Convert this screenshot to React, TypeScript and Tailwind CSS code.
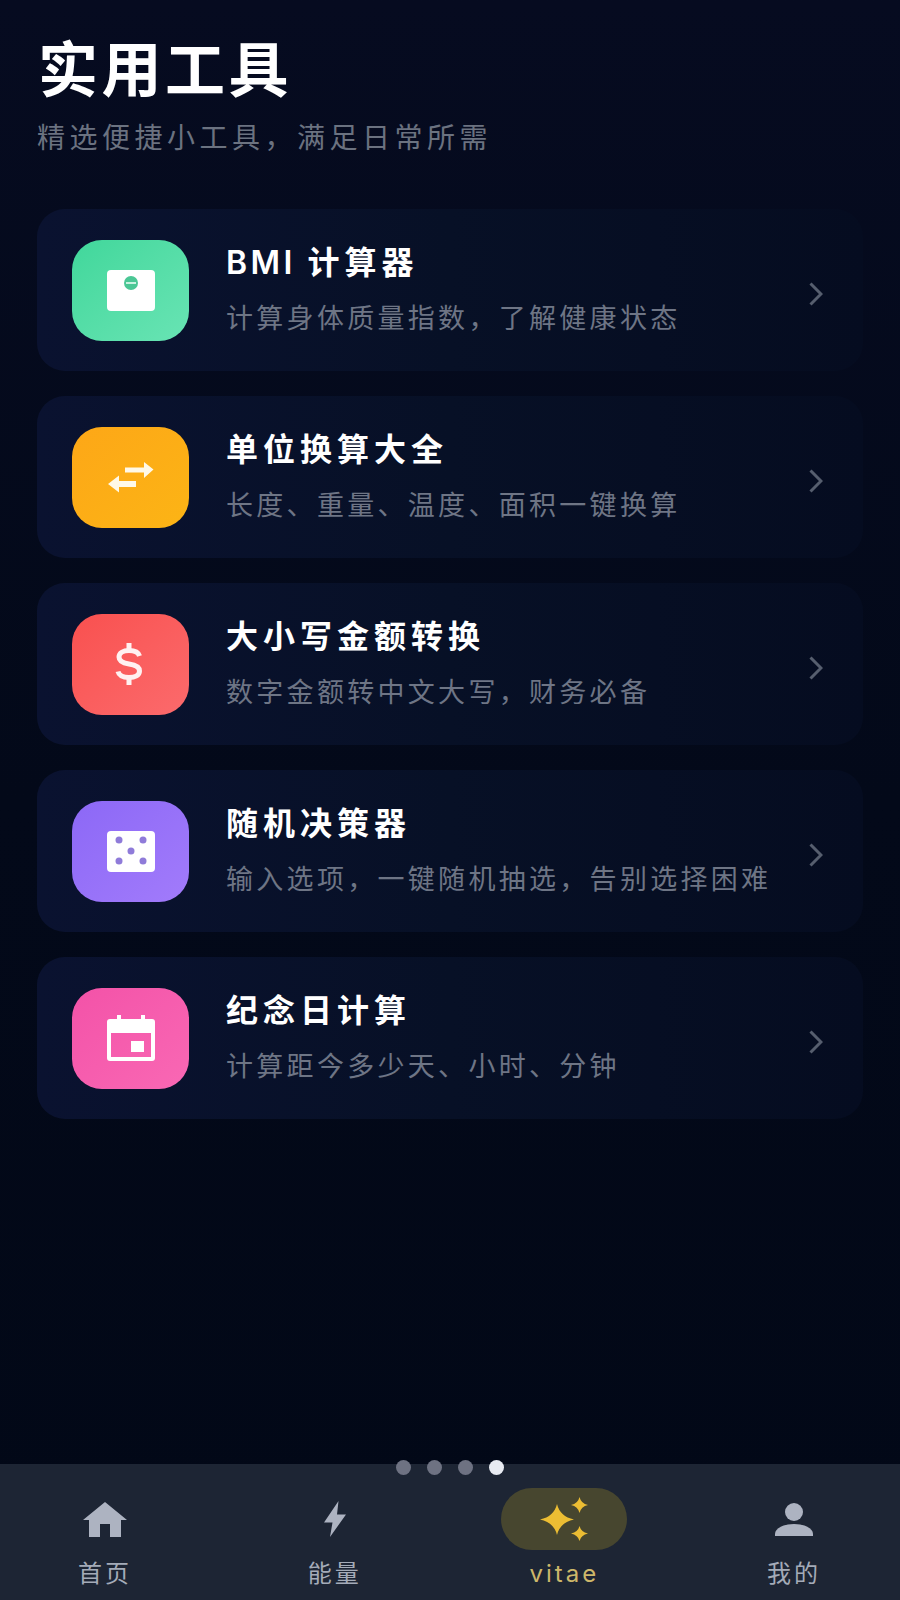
import type { FC, ReactNode } from "react";

const ScaleIcon = () => (
    <svg width="50" height="43" viewBox="0 0 50 43">
        <rect x="1" y="1" width="48" height="41" rx="4" fill="#ffffff" />
        <circle cx="25" cy="14" r="7" fill="#4bc795" />
        <rect x="20" y="13" width="10" height="2" fill="#c9f2e0" />
    </svg>
);

const SwapIcon = () => (
    <svg className="mt-[3px]" width="50" height="36" viewBox="0 0 50 36" fill="#fff9e8">
        <path d="M19 6.500h19V1l9.500 7.500L38 17v-5.500H19z" />
        <path d="M30 20H13v-5.500L2 23l11 8.500V26h17z" />
    </svg>
);

const DollarIcon = () => (
    <svg className="mr-[4px]" width="30" height="44" viewBox="0 0 30 44" fill="none" stroke="#fff1f1" strokeWidth="5">
        <path d="M25.500 14c-1-3.500-5-5.500-10.500-5.500-6 0-10 2.500-10 6.500 0 4 3 6 10 7 7 1 10.500 3 10.500 7 0 4.500-4.500 6.500-10.500 6.500-6 0-10-2-11-6" />
        <path d="M15 1v7M15 36v7" />
    </svg>
);

const DiceIcon = () => (
    <svg width="50" height="43" viewBox="0 0 50 43">
        <rect x="1" y="1" width="48" height="41" rx="4" fill="#ffffff" />
        <g fill="#8f7bd9">
            <circle cx="13" cy="10" r="3.500" />
            <circle cx="37" cy="10" r="3.500" />
            <circle cx="25" cy="21" r="3.500" />
            <circle cx="13" cy="31" r="3.500" />
            <circle cx="37" cy="31" r="3.500" />
        </g>
    </svg>
);

const CalendarIcon = () => (
    <svg width="50" height="46" viewBox="0 0 50 46" fill="#ffffff">
        <path d="M11 0h4v4h20V0h4v4h7a3 3 0 0 1 3 3v36a3 3 0 0 1-3 3H4a3 3 0 0 1-3-3V7a3 3 0 0 1 3-3h7zM5 18v24h40V18z" fillRule="evenodd" />
        <rect x="25" y="26" width="13" height="11" />
    </svg>
);

type Tool = {
    title: ReactNode;
    desc: string;
    gradient: string;
    icon: ReactNode;
};

const tools: Tool[] = [
    {
        title: (
            <>
                <span className="tracking-[3.500px]">BMI </span>计算器
            </>
        ),
        desc: "计算身体质量指数，了解健康状态",
        gradient: "bg-gradient-to-br from-[#40d79b] to-[#68e4b4]",
        icon: <ScaleIcon />,
    },
    {
        title: "单位换算大全",
        desc: "长度、重量、温度、面积一键换算",
        gradient: "bg-gradient-to-br from-[#fda717] to-[#fcb415]",
        icon: <SwapIcon />,
    },
    {
        title: "大小写金额转换",
        desc: "数字金额转中文大写，财务必备",
        gradient: "bg-gradient-to-br from-[#f9504f] to-[#fb6a6c]",
        icon: <DollarIcon />,
    },
    {
        title: "随机决策器",
        desc: "输入选项，一键随机抽选，告别选择困难",
        gradient: "bg-gradient-to-br from-[#8c68f6] to-[#a27bfb]",
        icon: <DiceIcon />,
    },
    {
        title: "纪念日计算",
        desc: "计算距今多少天、小时、分钟",
        gradient: "bg-gradient-to-br from-[#f352a8] to-[#f968b4]",
        icon: <CalendarIcon />,
    },
];

const HomeIcon = () => (
    <svg width="44" height="35" viewBox="0 0 44 35" fill="#adb3c1">
        <path d="M22 0l22 18h-6v17H27V22H17v13H6V18H0z" />
    </svg>
);

const BoltIcon = () => (
    <svg width="24" height="36" viewBox="0 0 24 36" fill="#adb3c1">
        <path d="M15.500 0L1 21.500h8.500L7 36l16-22.500h-9z" />
    </svg>
);

const SparkleIcon = () => (
    <svg width="48" height="44" viewBox="0 0 48 44" fill="#ecbd33">
        <path d="M17 7Q20 19.500 34 22.500Q20 25.500 17 38Q14 25.500 0 22.500Q14 19.500 17 7z" />
        <path d="M39.500 0Q41 6.500 48 8Q41 9.500 39.500 16Q38 9.500 31 8Q38 6.500 39.500 0z" />
        <path d="M39.500 29Q41 35 48 36.500Q41 38 39.500 44Q38 38 31 36.500Q38 35 39.500 29z" />
    </svg>
);

const PersonIcon = () => (
    <svg width="38" height="33" viewBox="0 0 38 33" fill="#adb3c1">
        <circle cx="19" cy="9" r="9" />
        <path d="M0 33v-2c0-6 9-10 19-10s19 4 19 10v2z" />
    </svg>
);

const ToolCard: FC<{ tool: Tool }> = ({ tool }) => {
    return (
        <div className="flex h-[162px] items-center rounded-[28px] bg-gradient-to-r from-[#0a1230] via-[#071026] to-[#050c20] pl-[35px] pr-[40px]">
            <div className={`flex h-[101px] w-[117px] shrink-0 items-center justify-center rounded-[30px] ${tool.gradient}`}>
                {tool.icon}
            </div>
            <div className="ml-[37px] flex-1">
                <h2 className="text-[32px] leading-[40px] font-semibold tracking-[5px] text-white">{tool.title}</h2>
                <p className="mt-[18px] text-[27px] leading-[36px] tracking-[3.300px] text-[#6e7585]">{tool.desc}</p>
            </div>
            <svg className="mt-[8px] shrink-0" width="14" height="24" viewBox="0 0 14 24" fill="none" stroke="#565e6e" strokeWidth="3">
                <path d="M1.500 1.500L12 12 1.500 22.500" />
            </svg>
        </div>
    );
};

const NavItem: FC<{ label: string; active?: boolean; children: ReactNode }> = ({ label, active, children }) => {
    return (
        <div className="flex w-[126px] flex-col items-center">
            <div className={`flex h-[62px] w-[126px] items-center justify-center rounded-full ${active ? "bg-[#47462f]" : ""}`}>
                {children}
            </div>
            <span className={`mt-[8px] text-[24px] leading-[32px] tracking-[3px] ${active ? "text-[#cdb76a]" : "text-[#a4abb8]"}`}>
                {label}
            </span>
        </div>
    );
};

export default function App() {
    return (
        <div className="relative flex h-[1600px] w-[900px] flex-col overflow-hidden bg-gradient-to-b from-[#060b20] via-[#030919] to-[#020817] font-['Inter','Noto_Sans_CJK_SC',sans-serif]">
            <main className="flex-1 px-[37px] pt-[31px]">
                <h1 className="pl-[1px] text-[60px] leading-[78px] font-bold tracking-[3.500px] text-white">实用工具</h1>
                <p className="mt-[10px] text-[28px] leading-[38px] tracking-[4.500px] text-[#6b7280]">精选便捷小工具，满足日常所需</p>

                <div className="mt-[52px] flex flex-col gap-[25px]">
                    {tools.map((tool) => (
                        <ToolCard key={tool.desc} tool={tool} />
                    ))}
                </div>
            </main>

            {/* PAGE DOTS */}
            <div className="absolute left-[396px] top-[1460px] z-10 flex gap-[16px]">
                <span className="h-[15px] w-[15px] rounded-full bg-[#6e7282]" />
                <span className="h-[15px] w-[15px] rounded-full bg-[#6e7282]" />
                <span className="h-[15px] w-[15px] rounded-full bg-[#6e7282]" />
                <span className="h-[15px] w-[15px] rounded-full bg-[#e8ebf2]" />
            </div>

            {/* BOTTOM NAV */}
            <nav className="flex h-[136px] justify-between bg-[#1d2534] pl-[42px] pr-[43px] pt-[24px]">
                <NavItem label="首页">
                    <HomeIcon />
                </NavItem>
                <NavItem label="能量">
                    <BoltIcon />
                </NavItem>
                <NavItem label="vitae" active>
                    <SparkleIcon />
                </NavItem>
                <NavItem label="我的">
                    <PersonIcon />
                </NavItem>
            </nav>
        </div>
    );
}
